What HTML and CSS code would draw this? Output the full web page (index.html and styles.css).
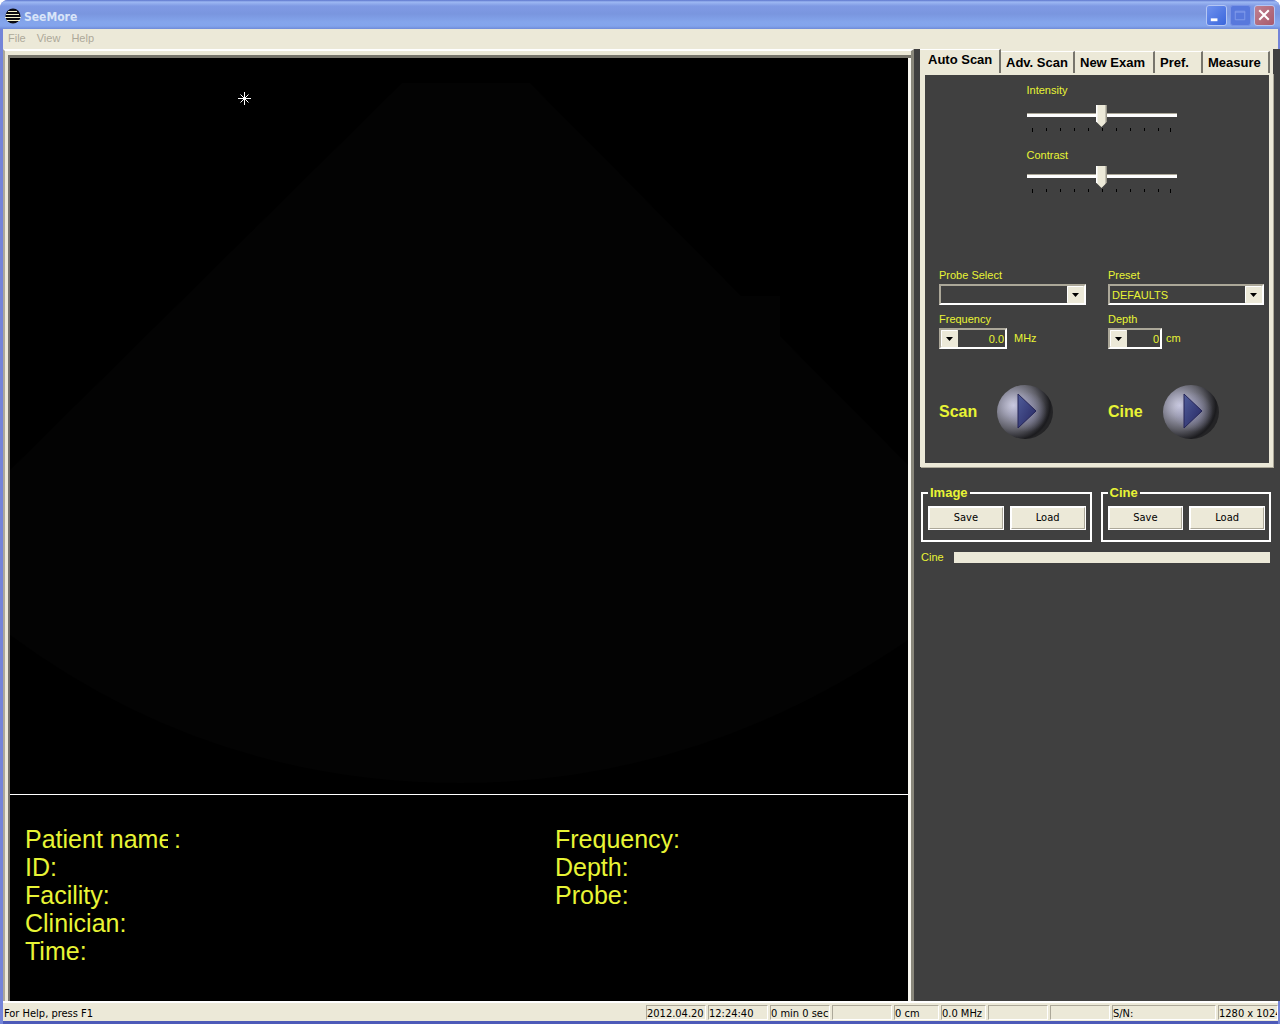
FILE: index.html
```html
<!DOCTYPE html>
<html lang="en">
<head>
<meta charset="utf-8">
<meta name="viewport" content="width=device-width, initial-scale=1">
<title>SeeMore</title>
<link rel="stylesheet" href="styles.css">
</head>
<body>
<div class="window">
  <header class="titlebar">
    <svg class="app-icon" viewBox="0 0 16 16" aria-hidden="true">
      <circle cx="8" cy="8" r="7.500" fill="#0a0a10"/>
      <path d="M3 3.500h9M1 6.500h13M0 9.500h16M2 12.500h13" stroke="#f4f2cc" stroke-width="1"/>
    </svg>
    <h1 class="title">SeeMore</h1>
    <button class="win-btn minimize" type="button" aria-label="Minimize"><svg viewBox="0 0 20 20"><path d="M4 13h7v3H4z" fill="#fff"/></svg></button>
    <button class="win-btn maximize" type="button" aria-label="Maximize" disabled><svg viewBox="0 0 20 20"><path d="M4.500 5.500h10v9h-10zM4 6.500h11" fill="none" stroke="#7f9aea"/></svg></button>
    <button class="win-btn close" type="button" aria-label="Close"><svg viewBox="0 0 20 20"><path d="M4.500 4.500l10 10M14.500 4.500l-10 10" stroke="#fff" stroke-width="2.200"/></svg></button>
  </header>
  <nav class="menubar">
    <button type="button" disabled>File</button>
    <button type="button" disabled>View</button>
    <button type="button" disabled>Help</button>
  </nav>
  <main class="workspace">
    <section class="viewer">
      <div class="scan-view">
        <svg class="fan" viewBox="0 0 898 736" preserveAspectRatio="none" aria-hidden="true">
          <path d="M392 25H520L731 238H770V278L898 407V582Q690 725 450 725Q200 725 0 577V412Z" fill="#030303"/>
        </svg>
        <svg class="marker" viewBox="0 0 13 13" aria-hidden="true"><path d="M6.500 0v13M0 6.500h13M2.500 2.500l8 8M10.500 2.500l-8 8" stroke="#fff"/></svg>
      </div>
      <div class="patient-info">
        <ul>
          <li><span class="name-label">Patient name</span> <span>:</span></li>
          <li>ID:</li>
          <li>Facility:</li>
          <li>Clinician:</li>
          <li>Time:</li>
        </ul>
        <ul>
          <li>Frequency:</li>
          <li>Depth:</li>
          <li>Probe:</li>
        </ul>
      </div>
    </section>
    <aside class="controls">
      <div class="tabs" role="tablist">
        <button class="tab active" type="button" role="tab" aria-selected="true">Auto Scan</button>
        <button class="tab" type="button" role="tab">Adv. Scan</button>
        <button class="tab" type="button" role="tab">New Exam</button>
        <button class="tab" type="button" role="tab">Pref.</button>
        <button class="tab" type="button" role="tab">Measure</button>
      </div>
      <div class="panel" role="tabpanel">
        <div class="sliders">
          <div class="slider">
            <label for="intensity">Intensity</label>
            <input id="intensity" type="range" min="0" max="10" value="5">
            <svg class="ticks" viewBox="0 0 150 4" aria-hidden="true"><path d="M5.500 0v4M19.500 0v3M33.500 0v3M47.500 0v3M61.500 0v3M75.500 0v3M89.500 0v3M103.500 0v3M117.500 0v3M131.500 0v3M143.500 0v4" stroke="#000"/></svg>
          </div>
          <div class="slider compact">
            <label for="contrast">Contrast</label>
            <input id="contrast" type="range" min="0" max="10" value="5">
            <svg class="ticks" viewBox="0 0 150 4" aria-hidden="true"><path d="M5.500 0v4M19.500 0v3M33.500 0v3M47.500 0v3M61.500 0v3M75.500 0v3M89.500 0v3M103.500 0v3M117.500 0v3M131.500 0v3M143.500 0v4" stroke="#000"/></svg>
          </div>
        </div>
        <div class="settings">
          <div class="field">
            <label for="probe">Probe Select</label>
            <select id="probe" class="combo"><option></option></select>
          </div>
          <div class="field">
            <label for="preset">Preset</label>
            <select id="preset" class="combo"><option>DEFAULTS</option></select>
          </div>
          <div class="field">
            <label for="frequency">Frequency</label>
            <div class="unit-row"><select id="frequency" class="combo stepper wide"><option>0.0</option></select><span>MHz</span></div>
          </div>
          <div class="field">
            <label for="depth">Depth</label>
            <div class="unit-row near"><select id="depth" class="combo stepper"><option>0</option></select><span>cm</span></div>
          </div>
        </div>
        <div class="players">
          <div class="player"><span id="scan-label">Scan</span>
            <button type="button" aria-labelledby="scan-label"><svg viewBox="0 0 60 60">
              <defs>
                <radialGradient id="ball" cx="30%" cy="38%" r="68%"><stop offset="0" stop-color="#d0d0e4"/><stop offset=".3" stop-color="#9e9eb1"/><stop offset=".65" stop-color="#606069"/><stop offset=".95" stop-color="#1b1b1e"/><stop offset="1" stop-color="#242426"/></radialGradient>
                <radialGradient id="glow" cx="50%" cy="50%" r="50%"><stop offset="0" stop-color="#a0a0cc" stop-opacity=".6"/><stop offset="1" stop-color="#a0a0cc" stop-opacity="0"/></radialGradient>
                <linearGradient id="arrow" x1="0" x2="1" y1="0" y2="1"><stop offset="0" stop-color="#505d9b"/><stop offset="1" stop-color="#25255f"/></linearGradient>
              </defs>
              <ellipse cx="30" cy="30" rx="28" ry="27" fill="url(#ball)"/>
              <circle cx="32" cy="30" r="20" fill="url(#glow)"/>
              <path d="M23 12L41 29L23 46Z" fill="url(#arrow)" stroke="#242456"/>
            </svg></button></div>
          <div class="player"><span id="cine-label">Cine</span>
            <button type="button" aria-labelledby="cine-label"><svg viewBox="0 0 60 60">
              <ellipse cx="30" cy="30" rx="28" ry="27" fill="url(#ball)"/>
              <circle cx="32" cy="30" r="20" fill="url(#glow)"/>
              <path d="M23 12L41 29L23 46Z" fill="url(#arrow)" stroke="#242456"/>
            </svg></button></div>
        </div>
      </div>
      <div class="files">
        <fieldset><legend>Image</legend><button type="button">Save</button><button type="button">Load</button></fieldset>
        <fieldset><legend>Cine</legend><button type="button">Save</button><button type="button">Load</button></fieldset>
      </div>
      <div class="cine-progress"><label for="cine-bar">Cine</label><progress id="cine-bar" max="100" value="0"></progress></div>
    </aside>
  </main>
  <footer class="statusbar">
    <span class="help">For Help, press F1</span>
    <span class="cell c60">2012.04.20</span>
    <span class="cell c60">12:24:40</span>
    <span class="cell c60">0 min 0 sec</span>
    <span class="cell c60"></span>
    <span class="cell c45">0 cm</span>
    <span class="cell c45">0.0 MHz</span>
    <span class="cell c60"></span>
    <span class="cell c60"></span>
    <span class="cell c104">S/N:</span>
    <span class="cell c60">1280 x 1024</span>
  </footer>
</div>
</body>
</html>
```
FILE: styles.css
```css
:root {
  --face: #ece9d8;
  --dark: #404040;
  --yellow: #e8f435;
  --shade: #aca899;
  --ui: "Liberation Sans", Arial, sans-serif;
  --tahoma: "DejaVu Sans Condensed", "DejaVu Sans", sans-serif;
}

* { box-sizing: border-box; }

body {
  margin: 0;
  background: #fff;
  font: 11px/14px var(--ui);
}

button, select, input { font: inherit; margin: 0; padding: 0; }
svg { display: block; }

.window {
  display: flex;
  flex-direction: column;
  min-height: 100vh;
  overflow: hidden;
  background: #7384d8;
  border-radius: 8px 8px 0 0;
}

/* Title bar */
.titlebar {
  display: flex;
  align-items: center;
  gap: 2px;
  height: 29px;
  padding: 2px 5px 0;
  background: linear-gradient(#5b74cc 0, #9db8f3 2px, #7f9ae4 6px, #7a96df 14px, #84a5ec 22px, #83a4ec 26px, #6f8bd8 29px);
}
.app-icon { width: 16px; height: 16px; }
.title {
  flex: 1;
  margin: 0;
  padding: 2px 0 0 1px;
  font: bold 12px/16px var(--tahoma);
  color: #d8e4f8;
}
.win-btn {
  width: 21px;
  height: 21px;
  margin-left: 1px;
  border: 1px solid #b4c6f4;
  border-radius: 3px;
}
.minimize { background: linear-gradient(135deg, #6f92ee, #3a66dc); }
.maximize { background: #5878dc; border-color: #7993e6; }
.close { background: linear-gradient(135deg, #c08090, #a85a6c); }

/* Menu bar */
.menubar {
  display: flex;
  gap: 11px;
  height: 20px;
  margin: 0 2px 0 3px;
  padding: 2px 5px 0;
  background: var(--face);
}
.menubar button {
  height: 14px;
  border: 0;
  background: none;
  color: var(--shade);
}

/* Work area */
.workspace {
  display: grid;
  grid-template-columns: minmax(0, 5fr) minmax(366px, 2fr);
  flex: 1;
  border-left: 3px solid #7384d8;
  background: var(--dark);
}
.viewer {
  display: flex;
  flex-direction: column;
  border-style: solid;
  border-color: #fff #8a887c var(--face) var(--shade);
  border-width: 2px 3px 0 2px;
  background: #000;
  box-shadow: inset 3px 4px 0 var(--face), inset 5px 7px 0 #77756c, inset -3px 0 0 #f8f7f0;
  padding: 7px 3px 0 5px;
}
.scan-view {
  position: relative;
  flex: 1;
  border-bottom: 1px solid #fff;
}
.fan { width: 100%; height: 100%; position: absolute; inset: 0; }
.marker { position: absolute; left: 228px; top: 34px; width: 13px; height: 13px; }
.patient-info {
  display: grid;
  grid-template-columns: 530px 1fr;
  min-height: 206px;
  padding: 30px 15px 0;
  font-size: 25px;
  line-height: 28px;
  color: var(--yellow);
}
.patient-info ul { margin: 0; padding: 0; list-style: none; }
.patient-info li { display: flex; gap: 6px; }
.name-label { width: 143px; overflow: hidden; white-space: nowrap; }

/* Control column */
.controls { padding: 0 7px 0 6px; color: var(--yellow); }
.tabs {
  display: grid;
  grid-template-columns: 81px 74px 80px 48px 67px;
  align-items: end;
  height: 24px;
  background: var(--face);
}
.tab {
  height: 22px;
  padding: 0 0 0 5px;
  border: 0;
  border-top: 1px solid #fff;
  border-right: 2px solid #77756c;
  background: var(--face);
  font-size: 13px;
  font-weight: bold;
  text-align: left;
  white-space: nowrap;
}
.tab.active { height: 24px; padding: 0 0 3px 8px; }
.panel {
  display: flex;
  flex-direction: column;
  min-height: 394px;
  padding: 8px 5px 20px 14px;
  border: 5px solid var(--face);
  border-top-width: 2px;
  border-right-width: 4px;
  border-bottom-width: 4px;
  box-shadow: 1px 1px 0 var(--shade);
}
.sliders { display: grid; gap: 16px; justify-content: center; }
.slider { width: 150px; }
.slider label, .field label { display: block; height: 14px; }
.slider input {
  display: block;
  width: 150px;
  height: 22px;
  margin: 8px 0 1px;
  appearance: none;
  background: linear-gradient(var(--shade), var(--shade)) 0 8px / 100% 1px no-repeat, linear-gradient(#fff, #fff) 0 9px / 100% 3px no-repeat;
}
.slider.compact input { margin-top: 4px; }
.slider input::-webkit-slider-thumb {
  appearance: none;
  width: 11px;
  height: 22px;
  background: linear-gradient(90deg, #fff 1px, var(--face) 2px, var(--face) 9px, #99968a 10px);
  clip-path: polygon(0 0, 100% 0, 100% 75%, 50% 100%, 0 75%);
}
.ticks { width: 150px; height: 4px; }
.settings {
  display: grid;
  grid-template-columns: 147px 156px;
  justify-content: space-between;
  gap: 7px 22px;
  margin-top: 75px;
}
.combo {
  display: block;
  width: 100%;
  height: 21px;
  margin-top: 2px;
  padding: 0 22px 0 2px;
  border: 2px solid;
  border-color: var(--shade) #fff #fff var(--shade);
  border-radius: 0;
  appearance: none;
  color: var(--yellow);
  background: url("data:image/svg+xml,%3Csvg xmlns='http://www.w3.org/2000/svg' width='17' height='17'%3E%3Cpath d='M0 0h17v17H0z' fill='%23ece9d8'/%3E%3Cpath d='M.5 16V.5H16' fill='none' stroke='%23fff'/%3E%3Cpath d='M5 7h7l-3.500 4z'/%3E%3C/svg%3E") right center no-repeat var(--dark);
}
.combo.stepper { width: 54px; padding: 0 1px 0 20px; background-position: left center; text-align-last: right; }
.combo.stepper.wide { width: 68px; }
.unit-row { display: flex; align-items: center; gap: 7px; }
.unit-row.near { gap: 4px; }
.players {
  display: grid;
  grid-template-columns: 147px 156px;
  justify-content: space-between;
  margin-top: 33px;
}
.player { display: flex; align-items: center; gap: 18px; font-size: 16px; font-weight: bold; }
.player button { width: 60px; height: 60px; border: 0; background: none; }

.files {
  display: grid;
  grid-template-columns: 1fr 1fr;
  gap: 9px;
  margin: 18px 2px 0 1px;
}
fieldset {
  display: grid;
  grid-template-columns: 1fr 1fr;
  gap: 6px;
  min-width: 0;
  height: 57px;
  margin: 0;
  padding: 5px 4px 0 5px;
  border: 2px solid #fff;
}
legend { padding: 0 2px; font-size: 13px; font-weight: bold; line-height: 16px; }
fieldset button {
  height: 24px;
  border: 2px solid;
  border-color: #fff var(--shade) var(--shade) #fff;
  outline: 1px solid #fff;
  outline-offset: -1px;
  background: var(--face);
  font: 11px/14px var(--tahoma);
}
.cine-progress {
  display: flex;
  align-items: center;
  gap: 10px;
  margin: 8px 3px 0 1px;
}
progress { flex: 1; min-width: 0; height: 11px; appearance: none; border: 0; background: var(--face); }
progress::-webkit-progress-bar { background: var(--face); }

/* Status bar */
.statusbar {
  display: flex;
  gap: 2px;
  height: 23px;
  margin-right: 2px;
  margin-left: 3px;
  padding: 2px 0 1px;
  border-top: 2px solid #fff;
  border-bottom: 3px solid #4d5ab8;
  background: var(--face);
  font: 11px/15px var(--tahoma);
  white-space: nowrap;
}
.help { flex: 1; padding: 1px 0 0 1px; }
.cell {
  overflow: hidden;
  border: 1px solid;
  border-color: var(--shade) #fff #fff var(--shade);
}
.c45 { width: 45px; }
.c60 { width: 60px; }
.c104 { width: 104px; }
```
